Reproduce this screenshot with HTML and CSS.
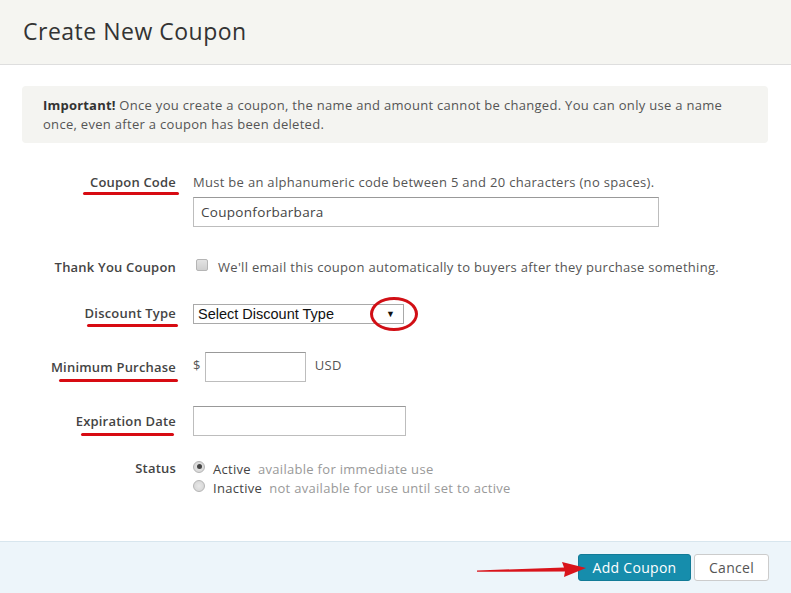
FILE: index.html
```html
<!DOCTYPE html>
<html>
<head>
<meta charset="utf-8">
<link rel="stylesheet" href="styles.css">
</head>
<body>
<div class="page">
  <header class="header">
    <h1 class="title">Create New Coupon</h1>
  </header>
  <main class="content">
    <div class="notice"><b>Important!</b> Once you create a coupon, the name and amount cannot be changed. You can only use a name once, even after a coupon has been deleted.</div>

    <div class="row row-code">
      <div class="label marked mark-code">Coupon Code</div>
      <div class="control">
        <div class="hint">Must be an alphanumeric code between 5 and 20 characters (no spaces).</div>
        <div class="input input-code">Couponforbarbara</div>
      </div>
    </div>

    <div class="row row-thanks">
      <div class="label">Thank You Coupon</div>
      <div class="control inline">
        <span class="checkbox"></span>
        <span class="hint">We'll email this coupon automatically to buyers after they purchase something.</span>
      </div>
    </div>

    <div class="row row-type">
      <div class="label marked mark-type">Discount Type</div>
      <div class="control">
        <div class="select"><span>Select Discount Type</span><span class="arrow">&#9660;</span><span class="circle"></span></div>
      </div>
    </div>

    <div class="row row-min">
      <div class="label marked mark-min">Minimum Purchase</div>
      <div class="control inline">
        <span class="currency">$</span>
        <span class="input input-min"></span>
        <span class="usd">USD</span>
      </div>
    </div>

    <div class="row row-exp">
      <div class="label marked mark-exp">Expiration Date</div>
      <div class="control">
        <div class="input input-exp"></div>
      </div>
    </div>

    <div class="row row-status">
      <div class="label">Status</div>
      <div class="control">
        <div class="radio-line"><span class="radio checked"></span><span class="opt">Active</span><span class="desc">available for immediate use</span></div>
        <div class="radio-line"><span class="radio"></span><span class="opt">Inactive</span><span class="desc">not available for use until set to active</span></div>
      </div>
    </div>
  </main>
  <footer class="footer">
    <svg class="pointer" width="120" height="20" viewBox="0 0 120 20">
      <path d="M1 12.5 L88 9.5 L86 4 L110 10 L88 19 L89 13.5 L1 13.8 Z" fill="#d9141b"/>
    </svg>
    <button class="btn btn-primary">Add Coupon</button>
    <button class="btn btn-cancel">Cancel</button>
  </footer>
</div>
</body>
</html>
```

FILE: styles.css
```css
* { box-sizing: border-box; }
html, body { margin: 0; padding: 0; background: #fff; }
body {
  font-family: "Open Sans", "Liberation Sans", sans-serif;
  font-size: 13px;
  letter-spacing: 0.3px;
  color: #555;
}
.page {
  width: 791px;
  height: 593px;
  display: flex;
  flex-direction: column;
  overflow: hidden;
}
.header {
  height: 65px;
  background: #f5f5f1;
  border-bottom: 1px solid #dedede;
  padding: 0 23px;
  display: flex;
  align-items: center;
  flex-shrink: 0;
}
.title {
  margin: 0;
  font-weight: 400;
  font-size: 23px;
  color: #333;
  letter-spacing: 0.5px;
  padding-bottom: 2px;
}
.content {
  flex: 1;
  padding: 21px 23px 0 22px;
}
.notice {
  background: #f4f4f1;
  border-radius: 4px;
  padding: 10px 24px 10px 21px;
  line-height: 19px;
  height: 57px;
  color: #555;
}
.notice b { color: #333; font-weight: 700; letter-spacing: 0.2px; }
.row {
  display: flex;
  align-items: flex-start;
}
.label {
  width: 154px;
  flex-shrink: 0;
  text-align: right;
  font-weight: 600;
  color: #444;
  line-height: 18px;
  position: relative;
  letter-spacing: 0.2px;
}
.control {
  margin-left: 17px;
  line-height: 18px;
}
.control.inline {
  display: flex;
  align-items: center;
}
.hint { color: #555; }
.row-code { margin-top: 30px; }
.input {
  border: 1px solid #bdbdbd;
  border-top-color: #999;
  background: #fff;
  height: 30px;
  display: block;
}
.input-code {
  width: 466px;
  margin-top: 6px;
  padding: 5px 7px;
  color: #444;
  font-size: 13.5px;
}
.row-thanks { margin-top: 31px; }
.checkbox {
  width: 12px;
  height: 12px;
  border: 1px solid #b5b5b5;
  border-radius: 2px;
  background: linear-gradient(#e3e3e3, #cfcfcf);
  margin: 0 10px 0 3px;
  position: relative;
  top: -2px;
}
.row-type { margin-top: 28px; }
.row-type .label { line-height: 19px; }
.select {
  width: 211px;
  height: 20px;
  border: 1px solid #a9a9a9;
  display: flex;
  align-items: center;
  justify-content: space-between;
  padding: 0 8px 0 4px;
  font-family: "Liberation Sans", Arial, sans-serif;
  font-size: 14.5px;
  letter-spacing: 0;
  color: #111;
  position: relative;
}
.arrow { font-size: 9px; color: #111; }
.circle {
  position: absolute;
  left: 176px;
  top: -8px;
  width: 48px;
  height: 34px;
  border: 3px solid #d10f15;
  border-radius: 50%;
}
.row-min { margin-top: 28px; }
.row-min .label { line-height: 30px; }
.currency { color: #555; margin-right: 4px; position: relative; top: -2px; }
.input-min { width: 101px; }
.usd { margin-left: 9px; color: #555; position: relative; top: -2px; }
.row-exp { margin-top: 24px; }
.row-exp .label { line-height: 30px; }
.input-exp { width: 213px; }
.row-status { margin-top: 23px; }
.radio-line {
  display: flex;
  align-items: center;
  height: 19.5px;
}
.radio {
  width: 12px;
  height: 12px;
  border-radius: 50%;
  border: 1px solid #b5b5b5;
  background: radial-gradient(circle, #e8e8e8 0%, #d2d2d2 100%);
  margin-right: 8px;
  position: relative;
  top: -2px;
  display: flex;
  align-items: center;
  justify-content: center;
}
.radio.checked::after {
  content: "";
  width: 5px;
  height: 5px;
  border-radius: 50%;
  background: #444;
}
.opt { color: #444; margin-right: 7px; }
.desc { color: #999; }
.marked::after {
  content: "";
  position: absolute;
  right: -2px;
  height: 3px;
  border-radius: 2px;
  background: #d70b12;
}
.mark-code::after { top: 19px; width: 96px; right: -3px; }
.mark-type::after { top: 20px; width: 91px; }
.mark-min::after { top: 27px; width: 119px; }
.mark-exp::after { top: 27px; width: 93px; right: 2px; }
.footer {
  height: 52px;
  flex-shrink: 0;
  background: #edf5fa;
  border-top: 1px solid #d8e6ee;
  display: flex;
  align-items: center;
  justify-content: flex-end;
  padding: 0 22px 0 0;
  gap: 3px;
  position: relative;
}
.btn {
  font-family: "Open Sans", "Liberation Sans", sans-serif;
  font-size: 14px;
  letter-spacing: 0.3px;
  height: 27px;
  border-radius: 3px;
  padding: 0 8px;
  cursor: pointer;
}
.btn-primary {
  background: #168dac;
  border: 1px solid #127b97;
  color: #fff;
  width: 113px;
  font-weight: 500;
}
.btn-cancel {
  background: #fff;
  border: 1px solid #ccc;
  color: #555;
  width: 75px;
}
.pointer {
  position: absolute;
  left: 476px;
  top: 16px;
}
```
